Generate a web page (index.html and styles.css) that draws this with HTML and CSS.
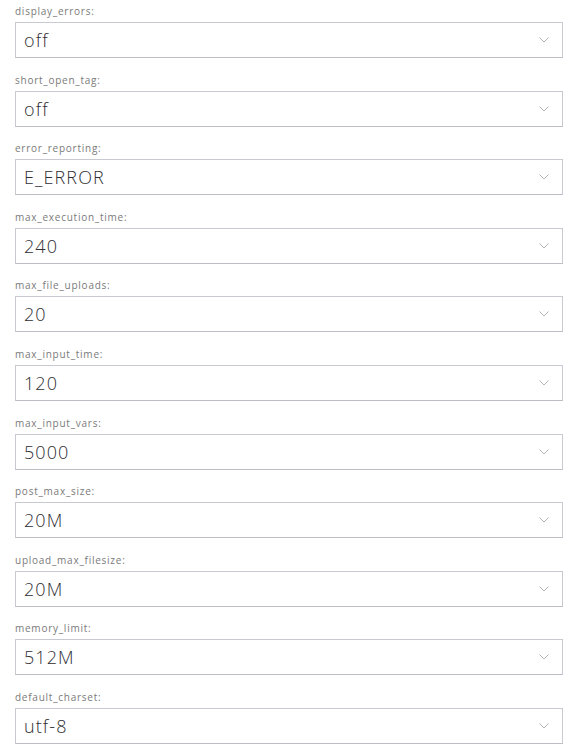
FILE: index.html
```html
<!DOCTYPE html>
<html lang="en">
<head>
    <meta charset="UTF-8">
    <meta name="viewport" content="width=device-width, initial-scale=1.0">
    <title>PHP Settings</title>
    <link rel="stylesheet" href="styles.css">
</head>
<body>
    <form class="settings">
        <div class="field">
            <label class="field-label" for="display_errors">display_errors:</label>
            <div class="select">
                <span class="select-value">off</span>
                <svg class="chevron" viewBox="0 0 10 6"><path d="M0.5 0.5 L5 5 L9.5 0.5"/></svg>
            </div>
        </div>
        <div class="field">
            <label class="field-label">short_open_tag:</label>
            <div class="select">
                <span class="select-value">off</span>
                <svg class="chevron" viewBox="0 0 10 6"><path d="M0.5 0.5 L5 5 L9.5 0.5"/></svg>
            </div>
        </div>
        <div class="field">
            <label class="field-label">error_reporting:</label>
            <div class="select">
                <span class="select-value">E_ERROR</span>
                <svg class="chevron" viewBox="0 0 10 6"><path d="M0.5 0.5 L5 5 L9.5 0.5"/></svg>
            </div>
        </div>
        <div class="field">
            <label class="field-label">max_execution_time:</label>
            <div class="select">
                <span class="select-value">240</span>
                <svg class="chevron" viewBox="0 0 10 6"><path d="M0.5 0.5 L5 5 L9.5 0.5"/></svg>
            </div>
        </div>
        <div class="field">
            <label class="field-label">max_file_uploads:</label>
            <div class="select">
                <span class="select-value">20</span>
                <svg class="chevron" viewBox="0 0 10 6"><path d="M0.5 0.5 L5 5 L9.5 0.5"/></svg>
            </div>
        </div>
        <div class="field">
            <label class="field-label">max_input_time:</label>
            <div class="select">
                <span class="select-value">120</span>
                <svg class="chevron" viewBox="0 0 10 6"><path d="M0.5 0.5 L5 5 L9.5 0.5"/></svg>
            </div>
        </div>
        <div class="field">
            <label class="field-label">max_input_vars:</label>
            <div class="select">
                <span class="select-value">5000</span>
                <svg class="chevron" viewBox="0 0 10 6"><path d="M0.5 0.5 L5 5 L9.5 0.5"/></svg>
            </div>
        </div>
        <div class="field">
            <label class="field-label">post_max_size:</label>
            <div class="select">
                <span class="select-value">20M</span>
                <svg class="chevron" viewBox="0 0 10 6"><path d="M0.5 0.5 L5 5 L9.5 0.5"/></svg>
            </div>
        </div>
        <div class="field">
            <label class="field-label">upload_max_filesize:</label>
            <div class="select">
                <span class="select-value">20M</span>
                <svg class="chevron" viewBox="0 0 10 6"><path d="M0.5 0.5 L5 5 L9.5 0.5"/></svg>
            </div>
        </div>
        <div class="field">
            <label class="field-label">memory_limit:</label>
            <div class="select">
                <span class="select-value">512M</span>
                <svg class="chevron" viewBox="0 0 10 6"><path d="M0.5 0.5 L5 5 L9.5 0.5"/></svg>
            </div>
        </div>
        <div class="field">
            <label class="field-label">default_charset:</label>
            <div class="select">
                <span class="select-value">utf-8</span>
                <svg class="chevron" viewBox="0 0 10 6"><path d="M0.5 0.5 L5 5 L9.5 0.5"/></svg>
            </div>
        </div>
    </form>
</body>
</html>
```
FILE: styles.css
```css
body {
    margin: 0;
    padding: 0;
    background: #fff;
    font-family: 'Open Sans', sans-serif;
    color: #333;
}
.settings {
    padding: 0 15px 0 15px;
    width: 548px;
}
.field {
    display: flex;
    flex-direction: column;
    margin-bottom: 10.6px;
}
.field-label {
    display: block;
    height: 22px;
    padding-top: 5px;
    box-sizing: border-box;
    font-size: 10px;
    line-height: 12px;
    letter-spacing: 0.75px;
    color: #7a7a7a;
}
.select {
    height: 36px;
    box-sizing: border-box;
    border: 1px solid #c9c9d1;
    border-bottom-color: #bdbdc5;
    background: #fff;
    display: flex;
    align-items: center;
    justify-content: space-between;
    padding: 0 13px 0 8px;
}
.select-value {
    font-size: 18px;
    font-weight: 300;
    letter-spacing: 1.1px;
    color: #2e2e33;
}
.chevron {
    width: 10px;
    height: 6px;
    fill: none;
    stroke: #b5b5b5;
    stroke-width: 1;
}
```
